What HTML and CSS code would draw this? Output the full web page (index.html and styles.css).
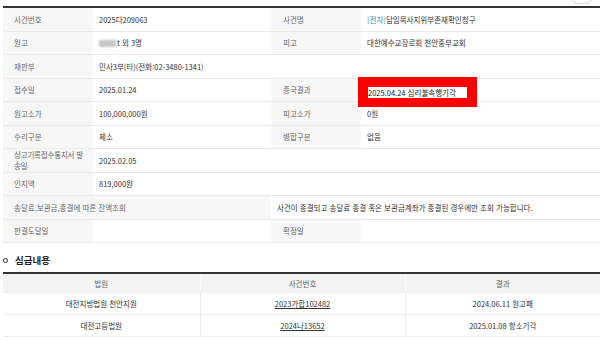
FILE: index.html
```html
<!DOCTYPE html>
<html lang="ko">
<head>
<meta charset="utf-8">
<title>사건일반내용</title>
<link rel="stylesheet" href="styles.css">
</head>
<body>
<div class="topbar"><span class="topbtn"></span></div>
<table class="info">
  <colgroup><col class="c-lab"><col class="c-val"><col class="c-lab"><col class="c-val2"></colgroup>
  <tr><th>사건번호</th><td>2025다209063</td><th>사건명</th><td><span class="elec">[전자]</span>담임목사지위부존재확인청구</td></tr>
  <tr><th>원고</th><td><span class="blur"></span>t 외 3명</td><th>피고</th><td>대한예수교장로회 천안중부교회</td></tr>
  <tr><th>재판부</th><td colspan="3">민사3부(타)(전화:02-3480-1341)</td></tr>
  <tr><th>접수일</th><td>2025.01.24</td><th>종국결과</th><td class="marked"><span class="redbox">2025.04.24 심리불속행기각</span></td></tr>
  <tr><th>원고소가</th><td>100,000,000원</td><th>피고소가</th><td>0원</td></tr>
  <tr><th>수리구분</th><td>제소</td><th>병합구분</th><td>없음</td></tr>
  <tr><th class="wrap">상고기록접수통지서 발송일</th><td colspan="3">2025.02.05</td></tr>
  <tr><th>인지액</th><td colspan="3">819,000원</td></tr>
  <tr><th colspan="2">송달료,보관금,종결에 따른 잔액조회</th><td colspan="2">사건이 종결되고 송달료 종결 혹은 보관금계좌가 종결된 경우에만 조회 가능합니다.</td></tr>
  <tr><th>판결도달일</th><td></td><th>확정일</th><td></td></tr>
</table>
<div class="sec"><span class="bullet"></span><span class="sec-title">심급내용</span></div>
<table class="level">
  <colgroup><col class="l1"><col class="l2"><col class="l3"></colgroup>
  <tr><th>법원</th><th>사건번호</th><th>결과</th></tr>
  <tr><td>대전지방법원 천안지원</td><td><a href="#" class="case">2023가합102482</a></td><td>2024.06.11 원고패</td></tr>
  <tr><td>대전고등법원</td><td><a href="#" class="case">2024나13652</a></td><td>2025.01.08 항소기각</td></tr>
</table>
</body>
</html>
```
FILE: styles.css
```css
html, body {
  margin: 0;
  background: #fff;
}
body {
  padding: 0 0 0 3px;
  font-family: "Noto Sans CJK KR", "Noto Sans", sans-serif;
  font-size: 7.5px;
  color: #333;
  overflow: hidden;
}
.topbar {
  height: 6px;
  overflow: hidden;
  display: flex;
  justify-content: flex-end;
  align-items: flex-end;
}
.topbtn {
  display: block;
  width: 18px;
  height: 16px;
  border: 1px solid #d4d4d4;
  border-radius: 6px;
  margin: 0 8px 2px 0;
  flex: none;
}
table {
  border-collapse: collapse;
  border-spacing: 0;
  table-layout: fixed;
}
.info {
  width: 597px;
  border-top: 2px solid #333;
}
.c-lab { width: 90px; }
.c-val { width: 178px; }
.c-val2 { width: 239px; }
.info th, .info td {
  height: 22.5px;
  padding: 0 6px;
  border-bottom: 1px solid #ebebeb;
  line-height: 11px;
  text-align: left;
  vertical-align: middle;
  font-weight: normal;
  white-space: normal;
}
.info th {
  background: #f7f7f7;
  color: #6a6a6a;
  padding-left: 11px;
  padding-right: 8px;
}
.info th.wrap {
  word-break: break-all;
  padding-right: 4px;
  letter-spacing: -0.2px;
}
.info td {
  background: #fff;
  color: #333;
}
.info th:nth-child(3) {
  padding-left: 12px;
}
.elec {
  color: #2f8bc0;
}
.blur {
  display: inline-block;
  width: 17px;
  height: 7px;
  background: #c6c6c6;
  filter: blur(1.2px);
  vertical-align: -1px;
  margin-right: 1px;
}
.marked {
  position: relative;
}
.redbox {
  position: absolute;
  left: -3px;
  top: -2px;
  width: 99px;
  height: 11px;
  line-height: 11px;
  border: 10px solid #ff0000;
  border-bottom-width: 9px;
  background: #fff;
  color: #222;
  white-space: nowrap;
  overflow: hidden;
}
.sec {
  height: 24px;
  padding-top: 5px;
  display: flex;
  align-items: center;
  gap: 7px;
}
.bullet {
  display: block;
  width: 3px;
  height: 3px;
  border: 1.4px solid #333;
  border-radius: 50%;
  margin-left: 0;
  flex: none;
}
.sec-title {
  font-size: 9.5px;
  font-weight: bold;
  color: #222;
}
.level {
  width: 597px;
  border-top: 2px solid #333;
}
.l1 { width: 197px; }
.l2 { width: 205px; }
.l3 { width: 195px; }
.level th, .level td {
  text-align: center;
  vertical-align: middle;
  font-weight: normal;
  padding: 0 4px;
  border-bottom: 1px solid #ededed;
  border-left: 1px solid #ededed;
}
.level th:first-child, .level td:first-child {
  border-left: none;
}
.level th {
  height: 18px;
  background: #f4f4f4;
  color: #666;
  border-left-color: #fafafa;
}
.level td {
  height: 21px;
  color: #333;
}
.case {
  color: #333;
  text-decoration: underline;
}
```
